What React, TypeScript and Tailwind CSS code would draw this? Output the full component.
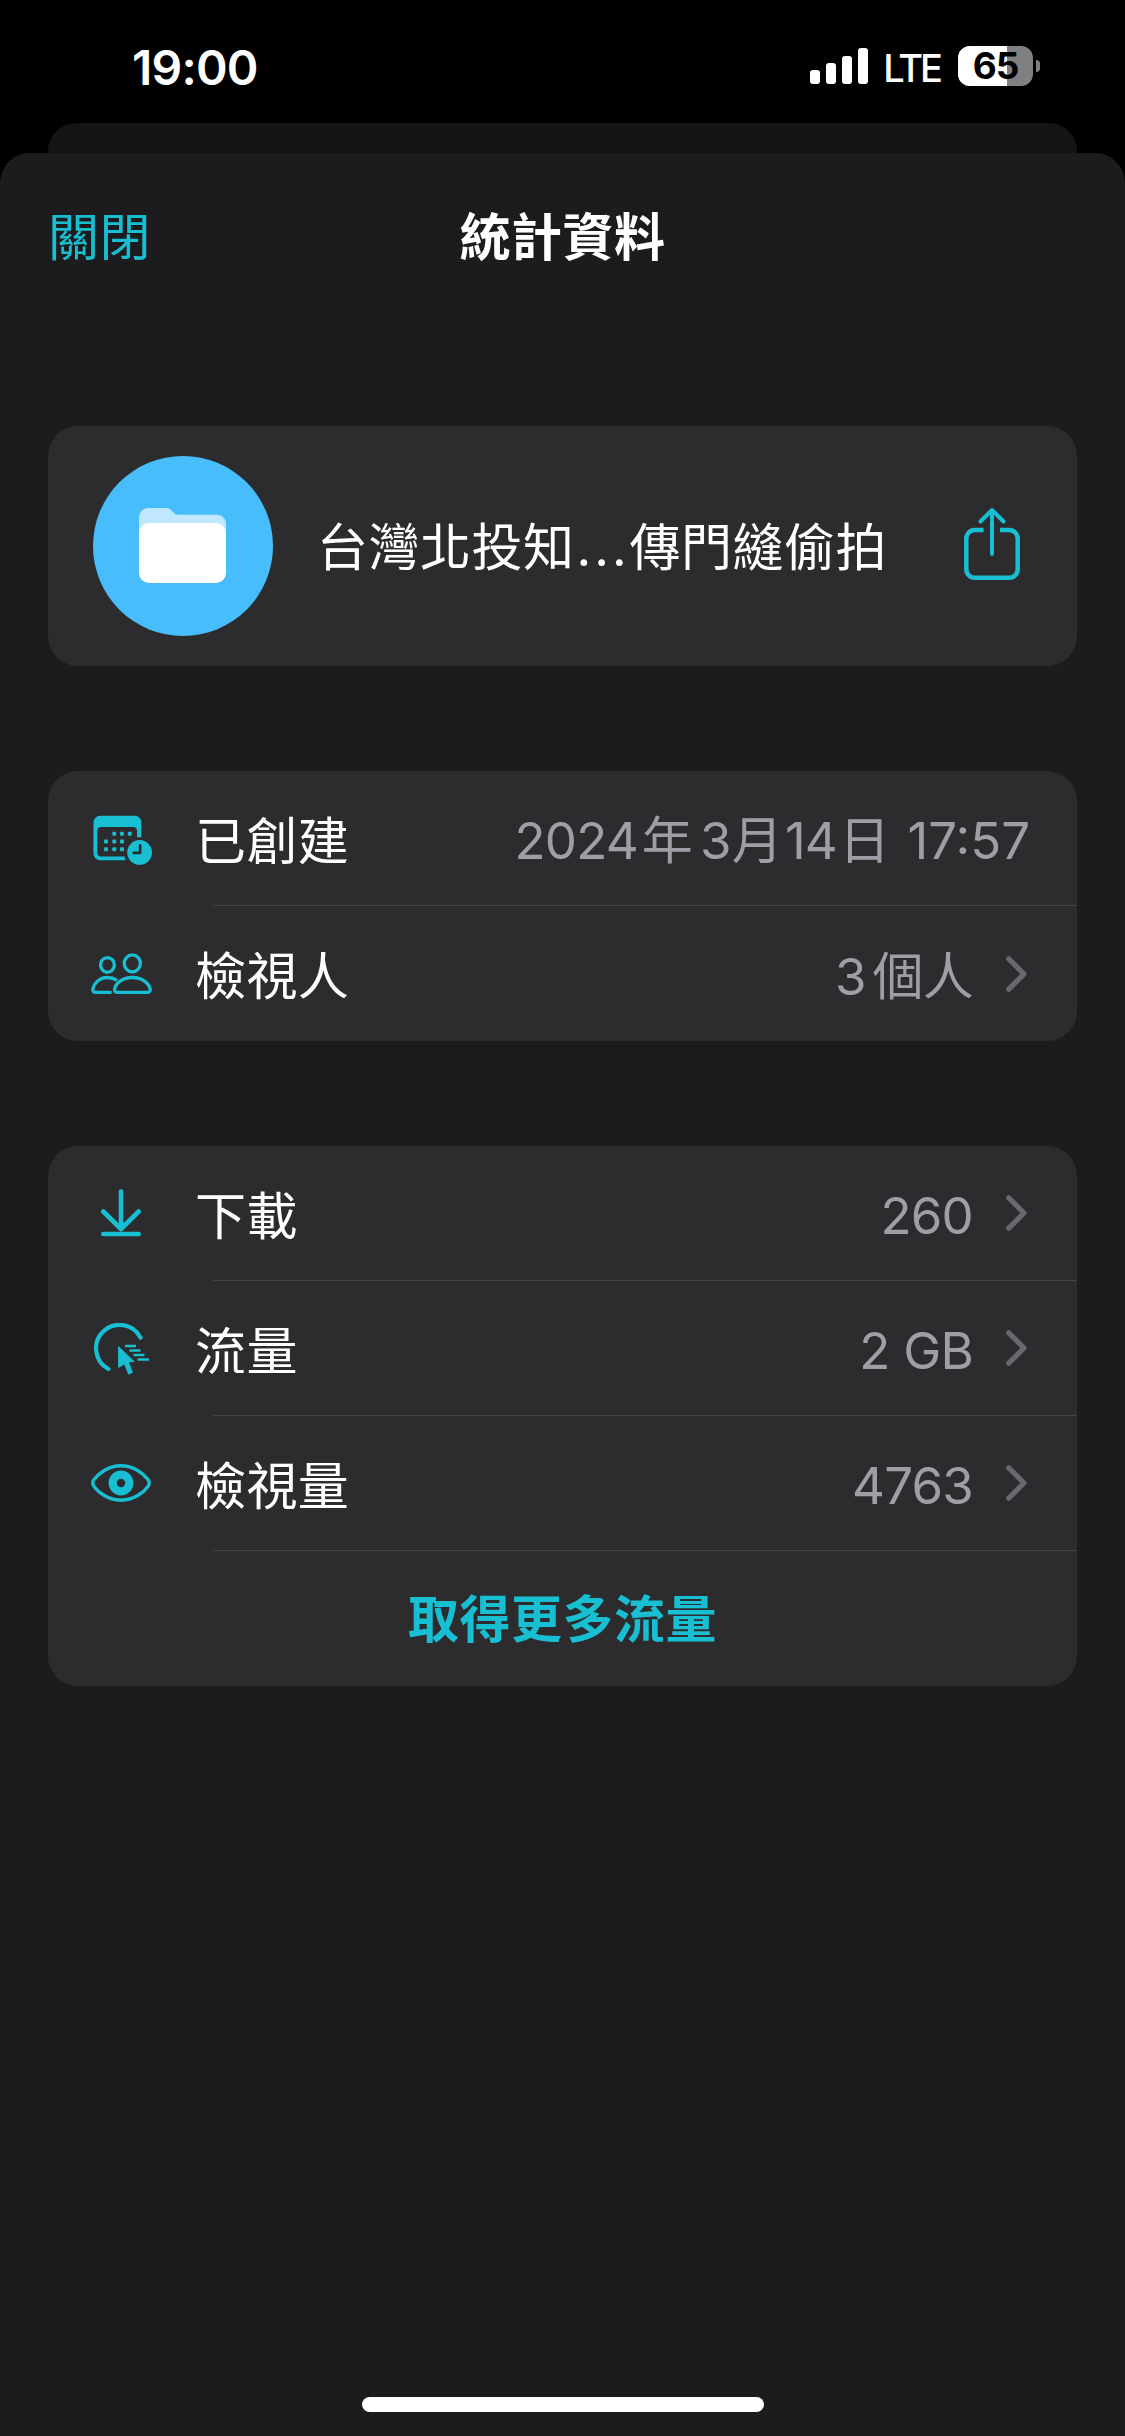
import type { ReactNode } from 'react';
import clsx from 'clsx';

function BatteryIcon({ level }: { level: number }) {
  return (
    <div className="flex items-center gap-[3px]">
      <div className="relative h-10 w-[75px] rounded-[12px] bg-[#808080]">
        <div className="h-full rounded-l-[12px] bg-white" style={{ width: `${level}%` }} />
        <span className="absolute inset-x-0 -top-[3px] text-center text-[37px] leading-[46px] font-bold tracking-[-1px] text-black">
          {level}
        </span>
      </div>
      <div className="h-[12px] w-[4px] rounded-r-full bg-[#808080]" />
    </div>
  );
}

function SignalIcon() {
  return (
    <div className="flex items-end gap-[6px]">
      <div className="h-[14px] w-[10px] rounded-[3px] bg-white" />
      <div className="h-[21px] w-[10px] rounded-[3px] bg-white" />
      <div className="h-[28px] w-[10px] rounded-[3px] bg-white" />
      <div className="h-[36px] w-[10px] rounded-[3px] bg-white" />
    </div>
  );
}

function FolderIcon() {
  return (
    <svg className="mr-0.5 mb-0.5" width="87" height="75" viewBox="0 0 87 75" fill="#fff">
      <path opacity=".65" d="M0 10C0 4 4 0 10 0h17c2.500 0 3.500.500 5 2l3.500 3.500c1 1 2 1.300 3.500 1.300h39c5 0 9 4 9 9V30H0z" />
      <rect y="15" width="87" height="60" rx="10" />
    </svg>
  );
}

function ShareIcon() {
  return (
    <svg className="mb-[5px]" width="58" height="74" viewBox="0 0 58 74" fill="none" stroke="currentColor" strokeWidth="4.500">
      <path d="M20.500 23H12c-5 0-8.700 3.700-8.700 8.700V62c0 5 3.700 8.800 8.700 8.800h34c5 0 8.700-3.800 8.700-8.800V31.700c0-5-3.700-8.700-8.700-8.700h-9" />
      <path d="M29 47V3.500M17.500 14.500 29 3l11.500 11.500" strokeWidth="4" strokeLinecap="round" strokeLinejoin="round" />
    </svg>
  );
}

function CalendarClockIcon() {
  const dots = [
    [20, 17], [28, 17], [36, 17],
    [11.5, 25], [20, 25], [28, 25],
    [11.5, 33], [20, 33], [28, 33],
  ];
  return (
    <svg className="mt-[5px] ml-0.5" width="62" height="52" viewBox="0 0 62 52" fill="currentColor">
      <path
        fillRule="evenodd"
        d="M8.500 0h36a6.500 6.500 0 0 1 6.500 6.500V22.500c-1.500-.4-3-.4-4.500 0V15.500a4 4 0 0 0-4-4h-33a4 4 0 0 0-4 4v22.500a4 4 0 0 0 4 4h24.300c.1 1.400.4 2.700.9 4H8.500a7 7 0 0 1-7-7V7A7 7 0 0 1 8.500 0z"
      />
      {dots.map(([x, y]) => (
        <rect key={`${x}-${y}`} x={x + 1} y={y - 0.5} width="4" height="4" rx="1" />
      ))}
      <circle cx="49.200" cy="37.800" r="14.500" fill="#2c2c2e" />
      <circle cx="49.200" cy="37.800" r="12.800" />
      <path d="M49.700 30.500v7.800h-6.500" fill="none" stroke="#2c2c2e" strokeWidth="2.800" strokeLinecap="round" strokeLinejoin="round" />
    </svg>
  );
}

function PeopleIcon() {
  return (
    <svg className="ml-px" width="62" height="42" viewBox="0 0 62 42" fill="none" stroke="currentColor" strokeWidth="3.400">
      <ellipse cx="16.700" cy="11.800" rx="7" ry="7.500" />
      <ellipse cx="42" cy="10.200" rx="8.200" ry="8.700" />
      <path d="M26.500 27.500C23.500 25.500 20.500 24.600 16.700 24.600 8 24.600 2.800 31 1.900 36.500c-.3 2 .5 3.100 2.300 3.100H21" />
      <path d="M26.500 39.600h31.200c2 0 2.700-1.400 2.400-3.200C59 30.500 52 24.600 42 24.600s-17 5.900-18 11.800c-.3 1.800.4 3.200 2.500 3.200z" />
    </svg>
  );
}

function DownloadIcon() {
  return (
    <svg width="40" height="48" viewBox="0 0 40 48" fill="none" stroke="currentColor" strokeWidth="4.600" strokeLinecap="round" strokeLinejoin="round">
      <path d="M20 2.500V40M2.300 22.500 20 40l17.700-17.500M2.300 45h35.400" />
    </svg>
  );
}

function TrafficIcon() {
  return (
    <svg className="mt-px ml-px" width="56" height="52" viewBox="0 0 56 52" fill="none" stroke="currentColor">
      <path d="M46.500 14.600A23.500 23.500 0 1 0 14.400 46" strokeWidth="4.200" strokeLinecap="round" />
      <path d="M24.500 23.500 40.200 38.600 34.500 39 38.500 49.500 34.600 51.300 30.500 41 24.500 44.500z" fill="currentColor" strokeWidth=".8" strokeLinejoin="round" />
      <path d="M31 23h11M35.500 27.500h11M39.500 32h11M43.500 36.500H55" strokeWidth="2.400" />
    </svg>
  );
}

function EyeIcon() {
  return (
    <svg width="60" height="38" viewBox="0 0 60 38" fill="none" stroke="currentColor">
      <path d="M30 1.800C43 1.800 52.500 9.500 57 15.600c1.700 2.400 1.700 4.400 0 6.800C52.500 28.500 43 36.200 30 36.200S7.500 28.500 3 22.400c-1.700-2.400-1.700-4.400 0-6.800C7.500 9.500 17 1.800 30 1.800z" strokeWidth="3.400" />
      <circle cx="30" cy="19" r="8.300" strokeWidth="8.200" />
    </svg>
  );
}

function Chevron() {
  return (
    <svg className="ml-[33px]" width="21" height="36" viewBox="0 0 21 36" fill="none" stroke="#68686e" strokeWidth="5.200" strokeLinecap="round" strokeLinejoin="round">
      <path d="M2.800 2.800 18 18 2.800 33.200" />
    </svg>
  );
}

interface RowProps {
  icon: ReactNode;
  label: string;
  value: ReactNode;
  link?: boolean;
  divider?: boolean;
}

function Row({ icon, label, value, link = true, divider = true }: RowProps) {
  return (
    <div>
      <div className={clsx('flex items-center pl-[42px]', link ? 'pr-[50px]' : 'pr-[47px]', divider ? 'h-[134px]' : 'h-[135px]')}>
        <div className="flex w-[62px] justify-center text-[#18bfd2]">{icon}</div>
        <span className="mt-[7px] ml-[43px] tracking-[0.4px] text-white">{label}</span>
        <span className="mt-[6px] ml-auto tracking-[-0.8px] text-[#9f9ea6]">{value}</span>
        {link && <Chevron />}
      </div>
      {divider && <div className="ml-[165px] h-px bg-[#444547]" />}
    </div>
  );
}

function CreatedDate() {
  return (
    <>
      2024<span className="mr-[8px] ml-[4px]">年</span>
      3<span className="mr-[3px] ml-px">月</span>
      14<span className="mr-[4px] ml-[2px]">日</span>
      <span className="tracking-normal"> 17:57</span>
    </>
  );
}

export default function App() {
  return (
    <div className="flex h-[2436px] w-[1125px] flex-col bg-black font-['Inter','Noto_Sans_CJK_TC',sans-serif] text-[51px] leading-[60px]" lang="zh-Hant">
      <div className="flex h-[123px] items-start justify-between pr-[85px] pl-[132px]">
        <span className="mt-[38px] text-[48px] font-semibold tracking-[-0.8px] text-white">19:00</span>
        <div className="mt-[46px] flex h-10 items-center text-white">
          <SignalIcon />
          <span className="mt-[3px] ml-[15px] text-[38px] leading-10 font-medium tracking-[-3px]">LTE</span>
          <div className="ml-[18px]">
            <BatteryIcon level={65} />
          </div>
        </div>
      </div>

      <div className="mx-12 h-[30px] rounded-t-[28px] bg-[#141414]" />

      <div className="flex flex-1 flex-col rounded-t-[30px] bg-[#1c1c1e] px-12">
        <header className="grid h-[168px] grid-cols-3 items-center pt-px">
          <span className="tracking-[0.4px] text-[#18bfd2]">關閉</span>
          <span className="text-center font-bold tracking-[0.4px] text-white">統計資料</span>
        </header>

        <section className="mt-[105px] flex h-[240px] items-center rounded-[30px] bg-[#2c2c2e] pr-[56px] pl-[45px]">
          <div className="flex size-[180px] items-center justify-center rounded-full bg-[#48bdfb]">
            <FolderIcon />
          </div>
          <span className="mt-[3px] ml-[44px] tracking-[0.5px] whitespace-nowrap text-white">
            台灣北投知
            <span className="ml-[2px] tracking-[3px]">...</span>
            傳門縫偷拍
          </span>
          <div className="ml-auto text-[#18bfd2]">
            <ShareIcon />
          </div>
        </section>

        <section className="mt-[105px] rounded-[30px] bg-[#2c2c2e]">
          <Row icon={<CalendarClockIcon />} label="已創建" value={<CreatedDate />} link={false} />
          <Row icon={<PeopleIcon />} label="檢視人" value={<>3<span className="ml-[7px]">個人</span></>} divider={false} />
        </section>

        <section className="mt-[105px] rounded-[30px] bg-[#2c2c2e]">
          <Row icon={<DownloadIcon />} label="下載" value="260" />
          <Row icon={<TrafficIcon />} label="流量" value="2 GB" />
          <Row icon={<EyeIcon />} label="檢視量" value="4763" />
          <div className="flex h-[135px] items-center justify-center pt-[3px] font-bold tracking-[0.5px] text-[#18bfd2]">取得更多流量</div>
        </section>

        <div className="mx-auto mt-auto mb-6 h-[15px] w-[402px] rounded-full bg-white" />
      </div>
    </div>
  );
}
